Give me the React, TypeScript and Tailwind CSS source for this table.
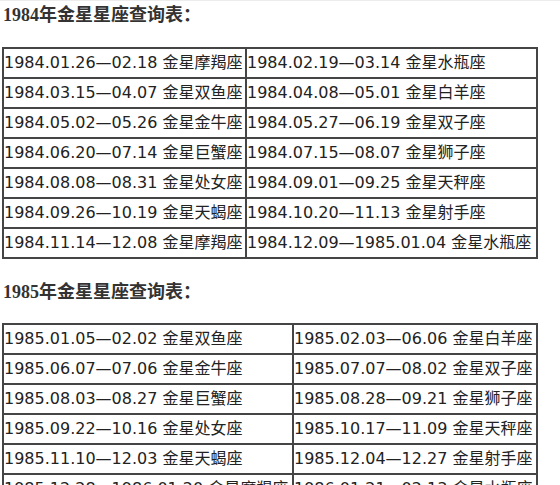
import React from "react";

const t1: [string, string][] = [
  ["1984.01.26—02.18 金星摩羯座", "1984.02.19—03.14 金星水瓶座"],
  ["1984.03.15—04.07 金星双鱼座", "1984.04.08—05.01 金星白羊座"],
  ["1984.05.02—05.26 金星金牛座", "1984.05.27—06.19 金星双子座"],
  ["1984.06.20—07.14 金星巨蟹座", "1984.07.15—08.07 金星狮子座"],
  ["1984.08.08—08.31 金星处女座", "1984.09.01—09.25 金星天秤座"],
  ["1984.09.26—10.19 金星天蝎座", "1984.10.20—11.13 金星射手座"],
  ["1984.11.14—12.08 金星摩羯座", "1984.12.09—1985.01.04 金星水瓶座"],
];

const t2: [string, string][] = [
  ["1985.01.05—02.02 金星双鱼座", "1985.02.03—06.06 金星白羊座"],
  ["1985.06.07—07.06 金星金牛座", "1985.07.07—08.02 金星双子座"],
  ["1985.08.03—08.27 金星巨蟹座", "1985.08.28—09.21 金星狮子座"],
  ["1985.09.22—10.16 金星处女座", "1985.10.17—11.09 金星天秤座"],
  ["1985.11.10—12.03 金星天蝎座", "1985.12.04—12.27 金星射手座"],
  ["1985.12.28—1986.01.20 金星摩羯座", "1986.01.21—02.13 金星水瓶座"],
];

function Table({ rows, w1, w2 }: { rows: [string, string][]; w1: string; w2: string }) {
  return (
    <table className="border-collapse border-2 border-[#454545]">
      <tbody>
        {rows.map((r, i) => (
          <tr key={i}>
            <td className={`${w1} h-[30px] border-2 border-[#454545] p-0 whitespace-nowrap align-middle`}>{r[0]}</td>
            <td className={`${w2} h-[30px] border-2 border-[#454545] p-0 whitespace-nowrap align-middle`}>{r[1]}</td>
          </tr>
        ))}
      </tbody>
    </table>
  );
}

export default function App() {
  return (
    <div className="w-[560px] h-[485px] overflow-hidden bg-white border-t border-[#ececec] pl-[2px] text-[#222]">
      <div
        className="mt-[4px] ml-[1px] text-[18px] leading-[20px] font-bold text-[#333]"
        style={{ fontFamily: '"Liberation Serif", "Noto Sans CJK SC", serif' }}
      >
        1984年金星星座查询表：
      </div>
      <div
        className="mt-[22px] text-[16px] leading-[20px]"
        style={{ fontFamily: '"DejaVu Sans", "Noto Sans CJK SC", sans-serif' }}
      >
        <Table rows={t1} w1="w-[243px]" w2="w-[291px]" />
      </div>
      <div
        className="mt-[23px] ml-[1px] text-[18px] leading-[20px] font-bold text-[#333]"
        style={{ fontFamily: '"Liberation Serif", "Noto Sans CJK SC", serif' }}
      >
        1985年金星星座查询表：
      </div>
      <div
        className="mt-[21px] text-[16px] leading-[20px]"
        style={{ fontFamily: '"DejaVu Sans", "Noto Sans CJK SC", sans-serif' }}
      >
        <Table rows={t2} w1="w-[290px]" w2="w-[244px]" />
      </div>
    </div>
  );
}
